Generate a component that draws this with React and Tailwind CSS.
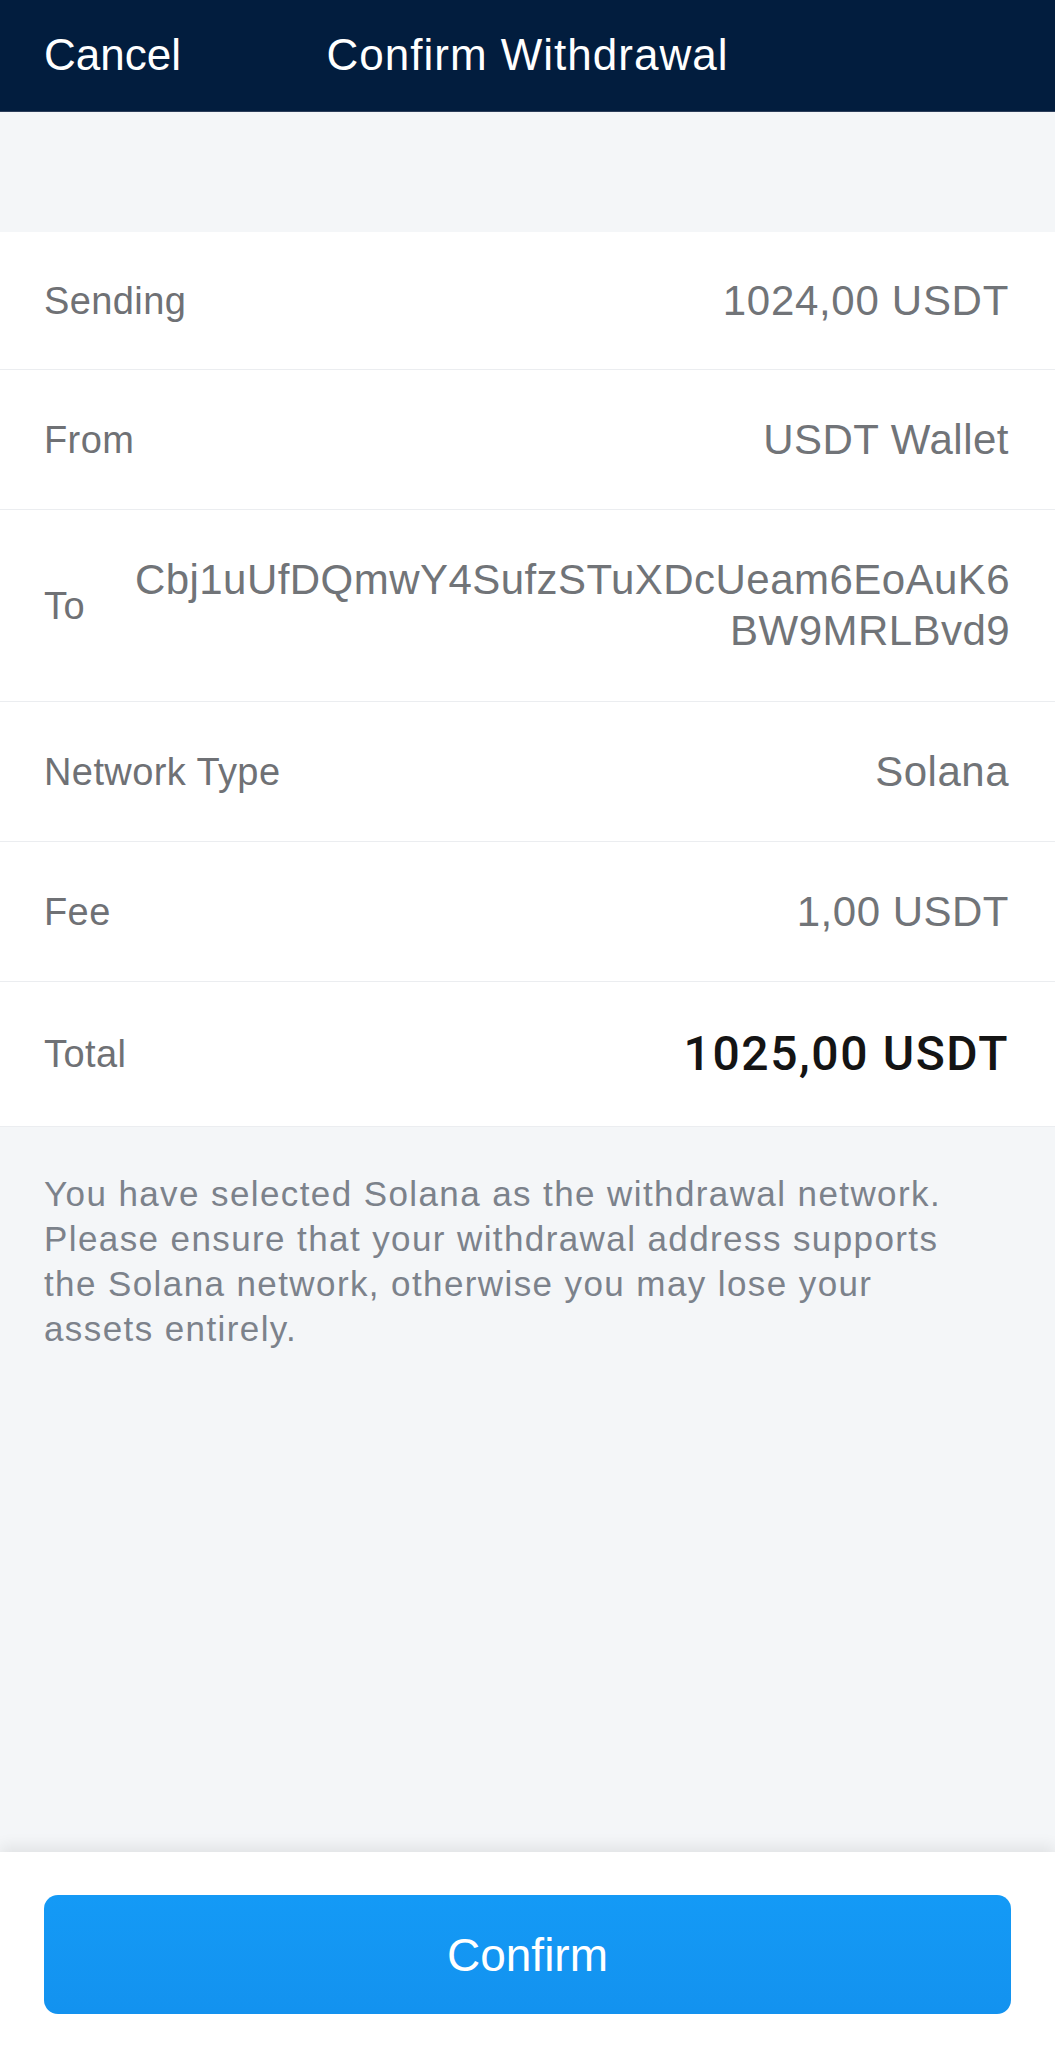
import React from "react";

const font = { fontFamily: '"Liberation Sans", Arial, sans-serif' };

function Row({ label, children, h = "h-[140px]" }) {
  return (
    <div className={`flex ${h} items-center justify-between border-b border-[#ebedf0] pl-[44px] pr-[46px]`}>
      <span className="text-[38px] leading-none tracking-[0.4px] text-[#6f7175]">{label}</span>
      {children}
    </div>
  );
}

const val = "text-[42px] leading-none tracking-[0.5px] text-[#717478]";

export default function App() {
  return (
    <div className="flex h-[2048px] w-full flex-col bg-[#f4f6f8]" style={font}>
      <header className="grid h-[112px] grid-cols-[1fr_auto_1fr] items-center border-b border-[#2c3e5a] bg-[#021d3e] px-[44px] text-white">
        <span className="pb-[2px] text-[44px] leading-none">Cancel</span>
        <span className="pb-[2px] text-[44px] leading-none tracking-[1px]">Confirm Withdrawal</span>
        <span />
      </header>

      <div className="h-[120px]" />

      <section className="bg-white">
        <Row label="Sending" h="h-[138px]">
          <span className="text-[42px] leading-none tracking-[0.7px] text-[#717478]">1024,00 USDT</span>
        </Row>
        <Row label="From">
          <span className={val}>USDT Wallet</span>
        </Row>
        <Row label="To" h="h-[192px]">
          <span className="ml-[50px] pb-[2px] text-right text-[42px] leading-[51px] tracking-[0.45px] text-[#717478]">
            <span className="block">Cbj1uUfDQmwY4SufzSTuXDcUeam6EoAuK6</span>
            <span className="block">BW9MRLBvd9</span>
          </span>
        </Row>
        <Row label="Network Type">
          <span className={val}>Solana</span>
        </Row>
        <Row label="Fee">
          <span className={val}>1,00 USDT</span>
        </Row>
        <Row label="Total" h="h-[145px]">
          <span
            className="text-[48px] font-medium leading-none tracking-[1.6px] text-[#141414]"
            style={{ fontFamily: 'Roboto, "Liberation Sans", sans-serif' }}
          >
            1025,00 USDT
          </span>
        </Row>
      </section>

      <p className="pl-[44px] pr-[20px] pt-[44px] text-[35px] leading-[45px] tracking-[1.4px] text-[#7c828b]">
        You have selected Solana as the withdrawal network.
        <br />
        Please ensure that your withdrawal address supports
        <br />
        the Solana network, otherwise you may lose your
        <br />
        assets entirely.
      </p>

      <div className="flex-1" />

      <footer className="relative h-[196px] bg-white px-[44px] pt-[43px] shadow-[0_-6px_14px_rgba(0,0,0,0.08)]">
        <button className="flex h-[119px] w-full items-center justify-center rounded-[14px] bg-gradient-to-b from-[#149af6] to-[#1392ef] text-[46px] leading-none text-white">
          Confirm
        </button>
      </footer>
    </div>
  );
}
